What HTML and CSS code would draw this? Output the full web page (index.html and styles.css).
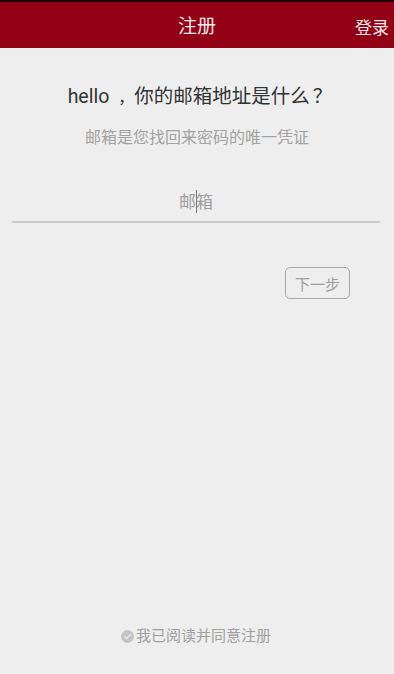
FILE: index.html
```html
<!DOCTYPE html>
<html lang="zh">
<head>
<meta charset="utf-8">
<title>注册</title>
<link rel="stylesheet" href="styles.css">
</head>
<body>
<div class="page">
  <header class="topbar">
    <div class="topbar-title">注册</div>
    <div class="topbar-action">登录</div>
  </header>
  <main class="content">
    <h1 class="question">hello<span class="punct-comma">，</span>你的邮箱地址是什么<span class="punct-q">？</span></h1>
    <p class="hint">邮箱是您找回来密码的唯一凭证</p>
    <div class="field">
      <input class="email-input" type="text" placeholder="邮箱">
      <span class="caret"></span>
    </div>
    <div class="actions">
      <button class="next-btn" type="button">下一步</button>
    </div>
  </main>
  <footer class="agree">
    <span class="check">
      <svg width="13" height="13" viewBox="0 0 13 13"><circle cx="6.5" cy="6.5" r="6.5" fill="#c4c4c4"/><path d="M3.6 6.7 L5.7 8.6 L9.4 4.6" fill="none" stroke="#e6e6e6" stroke-width="1.4" stroke-linecap="round" stroke-linejoin="round"/></svg>
    </span>
    <span class="agree-text">我已阅读并同意注册</span>
  </footer>
</div>
</body>
</html>
```

FILE: styles.css
```css
html, body {
  margin: 0;
  padding: 0;
  background: #eeeeee;
}
body {
  font-family: Roboto, "Noto Sans CJK SC", "Noto Sans", sans-serif;
}
.page {
  width: 394px;
  height: 674px;
  display: flex;
  flex-direction: column;
  overflow: hidden;
}
.topbar {
  height: 46px;
  border-top: 2px solid #1c0306;
  background: #910014;
  display: flex;
  align-items: center;
  justify-content: center;
  position: relative;
  color: #f4e9ea;
}
.topbar-title {
  font-size: 19px;
  line-height: 46px;
  padding-top: 3px;
}
.topbar-action {
  position: absolute;
  right: 5px;
  top: 3px;
  font-size: 17px;
  line-height: 46px;
}
.content {
  display: flex;
  flex-direction: column;
}
.question {
  margin: 37px 0 0;
  padding-left: 6px;
  font-size: 19.5px;
  font-weight: normal;
  line-height: 24px;
  text-align: center;
  color: #333333;
}
.punct-comma {
  font-size: 16px;
  line-height: 1;
  padding-left: 9px;
}
.punct-q {
  line-height: 1;
  padding-left: 3px;
}
.hint {
  margin: 18px 0 0;
  font-size: 16px;
  line-height: 22px;
  text-align: center;
  color: #a2a2a2;
}
.field {
  margin: 34px 14px 0 12px;
  height: 38px;
  border-bottom: 2px solid #cccccc;
  position: relative;
}
.email-input {
  width: 100%;
  height: 38px;
  box-sizing: border-box;
  border: none;
  background: transparent;
  outline: none;
  text-align: center;
  font-family: inherit;
  font-size: 17px;
  color: #333333;
  padding: 0;
}
.email-input::placeholder {
  color: #9e9e9e;
}
.caret {
  position: absolute;
  left: 184px;
  top: 7px;
  width: 1px;
  height: 23px;
  background: #777777;
}
.actions {
  display: flex;
  justify-content: flex-end;
  margin: 44px 44px 0 0;
}
.next-btn {
  width: 65px;
  height: 32px;
  border: 1px solid #a8a8a8;
  border-radius: 5px;
  background: transparent;
  font-family: inherit;
  font-size: 15px;
  color: #9c9c9c;
  padding: 0;
}
.agree {
  margin-top: auto;
  padding-bottom: 28px;
  display: flex;
  align-items: center;
  justify-content: center;
  gap: 2px;
  height: 20px;
  padding-right: 2px;
}
.check {
  display: flex;
  width: 13px;
  height: 13px;
}
.agree-text {
  font-size: 15px;
  line-height: 20px;
  color: #a0a0a0;
}
```
